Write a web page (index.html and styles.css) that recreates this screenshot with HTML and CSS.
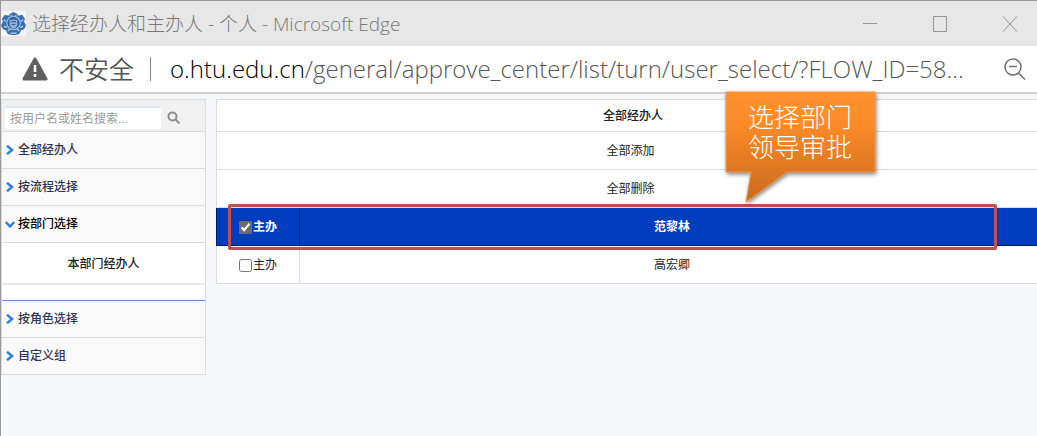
FILE: index.html
```html
<!DOCTYPE html>
<html lang="zh-CN">
<head>
<meta charset="utf-8">
<title>选择经办人和主办人 - 个人</title>
<link rel="stylesheet" href="styles.css">
</head>
<body>
<div class="window">
  <header class="titlebar">
    <svg class="logo" viewBox="0 0 26 26" aria-hidden="true">
      <rect width="26" height="26" fill="#f4f6f9"/>
      <path d="M13 1l4 2 1 2 4-1 3 4-1 3 2 4-2 4-3 1-2 4-4 1h-4l-4-1-2-4-3-1-2-4 2-4-1-3 3-4 4 1 1-2z" fill="#3b70b0"/>
      <circle cx="13" cy="12.500" r="7" fill="#2e62a6" stroke="#a9c1df" stroke-width="1.200"/>
      <path d="M9 9h8v5q0 3-4 4.500-4-1.500-4-4.500z" fill="#8fafd6"/>
      <path d="M10.500 11h5M11 14h4" stroke="#2e62a6" stroke-width="1.200"/>
      <path d="M3 9l2 2M23 9l-2 2M3 16l3 1M23 16l-3 1M7 21l2-2M19 21l-2-2M10 23h6M10 4l1 1M16 4l-1 1" stroke="#c3d4ea" stroke-width="1.200"/>
    </svg>
    <span class="caption">选择经办人和主办人 - 个人 - Microsoft Edge</span>
    <button class="winbtn" aria-label="最小化"><svg width="16" height="18" viewBox="0 0 16 18"><path d="M1 8.500h14"/></svg></button>
    <button class="winbtn" aria-label="最大化"><svg width="16" height="18" viewBox="0 0 16 18"><path d="M1.500 1.500h13v15h-13z"/></svg></button>
    <button class="winbtn" aria-label="关闭"><svg width="16" height="18" viewBox="0 0 16 18"><path d="M1 1.500l14 15M15 1.500l-14 15"/></svg></button>
  </header>
  <div class="addressbar">
    <svg class="warning" width="26" height="24" viewBox="0 0 26 24" aria-hidden="true"><path d="M13 2L24 22H2z" fill="#5f5f5f" stroke="#5f5f5f" stroke-width="3" stroke-linejoin="round"/><path d="M13 8v7M13 17v3" stroke="#fff" stroke-width="2.500"/></svg>
    <span class="insecure">不安全</span>
    <span class="divider"></span>
    <span class="url"><b>o.htu.edu.cn</b>/general/approve_center/list/turn/user_select/?FLOW_ID=58...</span>
    <button class="zoomout" aria-label="缩小"><svg width="24" height="24" viewBox="0 0 24 24"><circle cx="10" cy="10" r="8"/><path d="M6 9.500h8M15.500 16l6.500 6.500"/></svg></button>
  </div>
  <div class="page">
    <aside class="sidebar">
      <form class="search">
        <input type="text" aria-label="搜索" placeholder="按用户名或姓名搜索...">
        <button type="button" aria-label="搜索"><svg width="14" height="14" viewBox="0 0 14 14"><circle cx="5.500" cy="5.500" r="4"/><path d="M8.500 8.500l4 4"/></svg></button>
      </form>
      <a class="group" href="#"><svg class="chevron" viewBox="0 0 10 10"><path d="M2 .8L7 5 2 9.200"/></svg>全部经办人</a>
      <a class="group" href="#"><svg class="chevron" viewBox="0 0 10 10"><path d="M2 .8L7 5 2 9.200"/></svg>按流程选择</a>
      <a class="group open" href="#"><svg class="chevron" viewBox="0 0 10 10"><path d="M.8 3L5 7.500 9.200 3"/></svg>按部门选择</a>
      <div class="panel"><a class="choice" href="#">本部门经办人</a></div>
      <a class="group" href="#"><svg class="chevron" viewBox="0 0 10 10"><path d="M2 .8L7 5 2 9.200"/></svg>按角色选择</a>
      <a class="group" href="#"><svg class="chevron" viewBox="0 0 10 10"><path d="M2 .8L7 5 2 9.200"/></svg>自定义组</a>
    </aside>
    <main class="people">
      <table>
        <thead><tr><th colspan="2">全部经办人</th></tr></thead>
        <tbody>
          <tr><td class="name" colspan="2">全部添加</td></tr>
          <tr><td class="name" colspan="2">全部删除</td></tr>
          <tr class="selected"><td class="host"><label><input type="checkbox" checked>主办</label></td><td class="name">范黎林</td></tr>
          <tr><td class="host"><label><input type="checkbox">主办</label></td><td class="name">高宏卿</td></tr>
        </tbody>
      </table>
      <div class="highlight"></div>
    </main>
  </div>
  <div class="callout">
    <svg viewBox="0 0 152 114" aria-hidden="true">
      <defs><linearGradient id="orange" x1="0" y1="0" x2="0" y2="1"><stop offset="0" stop-color="#ff932d"/><stop offset=".3" stop-color="#fb8a28"/><stop offset="1" stop-color="#c9691d"/></linearGradient></defs>
      <path d="M1 1H150V81H62L21 111 26 81H1z" fill="url(#orange)" stroke="#f79646"/>
    </svg>
    <p>选择部门<br>领导审批</p>
  </div>
</div>
</body>
</html>
```
FILE: styles.css
```css
* { box-sizing: border-box; }
body {
  margin: 0;
  background: #f5f7fa;
  font: 12px/18px "Liberation Sans", "Noto Sans CJK SC", sans-serif;
  color: #222;
}
button { padding: 0; border: 0; background: none; }
svg { display: block; fill: none; }
a { color: inherit; text-decoration: none; }
.window {
  position: relative;
  min-height: 100vh;
  border-top: 1px solid #999;
  border-left: 1px solid #999;
  overflow: hidden;
}
.titlebar {
  display: flex;
  align-items: center;
  height: 45px;
  background: #e7e7e7;
}
.logo { width: 25px; height: 25px; }
.caption {
  flex: 1;
  margin-left: 6px;
  font: 300 19px/24px "Open Sans", "Noto Sans CJK SC", sans-serif;
  color: #777;
  white-space: nowrap;
}
.winbtn { display: flex; justify-content: center; width: 70px; }
.winbtn:last-child { margin-right: -8px; }
.winbtn svg { stroke: #959595; }
.addressbar {
  display: flex;
  align-items: center;
  height: 48px;
  padding: 0 10px 0 21px;
  border-bottom: 2px solid #d0d0d0;
  background: #fff;
  font: 24px/32px "Open Sans", "Noto Sans CJK SC", sans-serif;
  color: #555;
  white-space: nowrap;
}
.insecure { margin-left: 11px; font-size: 25px; font-weight: 350; }
.divider { width: 1px; height: 24px; margin: 0 19px 0 16px; background: #888; }
.url { flex: 1; font-weight: 300; }
.url b { font-weight: 300; color: #000; }
.zoomout svg { stroke: #707070; stroke-width: 1.5; }
.page { display: flex; align-items: flex-start; gap: 10px; padding-top: 5px; }
.sidebar {
  flex: none;
  width: 205px;
  border: 1px solid #dcdcdc;
  border-bottom: 0;
  background: #fff;
}
.search {
  display: flex;
  align-items: center;
  gap: 6px;
  height: 32px;
  padding: 4px 3px 0;
  border-bottom: 1px solid #dcdcdc;
  background: #f1f1f1;
}
.search input {
  width: 156px;
  height: 23px;
  padding: 0 5px;
  border: 0;
  border-top: 2px solid #dce7ec;
  border-radius: 2px;
  background: #fff;
  font: inherit;
}
.search input::placeholder { color: #999; }
.search svg { stroke: #8c8c8c; stroke-width: 2; }
.group {
  display: flex;
  align-items: center;
  gap: 3px;
  height: 37px;
  padding-left: 3px;
  border-bottom: 1px solid #dcdcdc;
  background: #f9f9f9;
  font-weight: 500;
  color: #33334d;
}
.open { color: #000; }
.chevron { width: 10px; height: 10px; stroke: #337fd8; stroke-width: 2.5; }
.panel { padding-bottom: 15px; border-bottom: 1px solid #5894c8; }
.choice {
  display: block;
  padding: 12px 0 10px;
  border-bottom: 2px solid #e8e8e8;
  text-align: center;
  font-weight: 500;
}
.people { position: relative; flex: 1; margin-right: -13px; }
table { width: 100%; border-collapse: collapse; background: #fff; }
th, td { height: 38px; padding: 1px 0 0; border: 1px solid #dcdcdc; text-align: center; }
th { height: 32px; font-weight: 500; }
.name { padding-right: 5px; }
.host { width: 83px; }
.host label { display: flex; align-items: center; justify-content: center; gap: 1px; }
.host input { width: 13px; height: 13px; margin: 0; accent-color: #6b6b6b; }
.selected td {
  border-color: #001a66;
  border-top-color: #9eabd0;
  background: #003cbe;
  font-weight: 700;
  color: #fff;
}
.highlight {
  position: absolute;
  top: 105px;
  left: 12px;
  right: 53px;
  height: 46px;
  border: 3px solid #c0504d;
  border-radius: 2px;
}
.callout { position: absolute; top: 90px; left: 724px; width: 152px; }
.callout svg { filter: drop-shadow(1px 2px 2px #0007); }
.callout p {
  position: absolute;
  top: 12px;
  left: 23px;
  margin: 0;
  font: 300 26px/30px "Liberation Sans", "Noto Sans CJK SC", sans-serif;
  color: #fff;
  white-space: nowrap;
}
```
